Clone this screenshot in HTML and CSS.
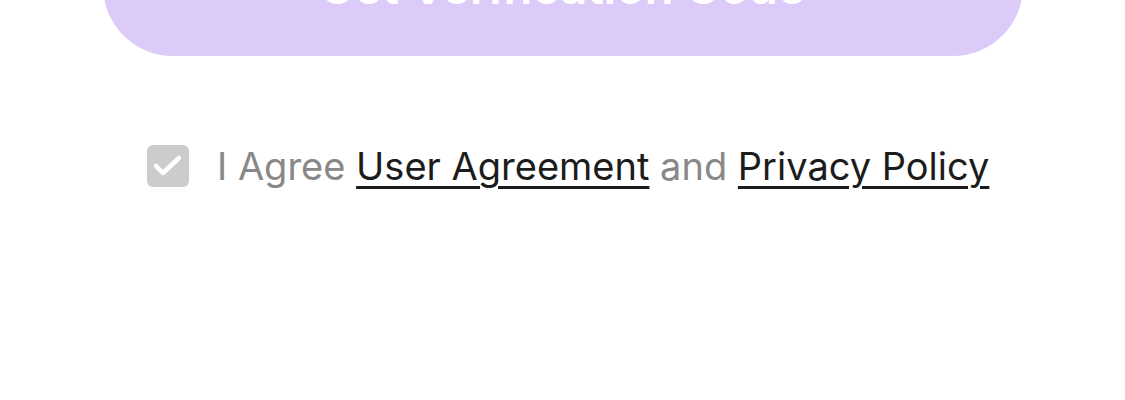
FILE: index.html
```html
<!DOCTYPE html>
<html>
<head>
<meta charset="utf-8">
<link rel="stylesheet" href="styles.css">
</head>
<body>
<div class="page">
  <button class="submit">Get Verification Code</button>
  <div class="agree">
    <span class="check">
      <svg width="42" height="42" viewBox="0 0 42 42"><path d="M9 21 L16 28 L32 13" fill="none" stroke="#fff" stroke-width="4.5" stroke-linecap="round" stroke-linejoin="round"/></svg>
    </span>
    <p class="agree-text">I Agree <a class="link">User Agreement</a> and <a class="link">Privacy Policy</a></p>
  </div>
</div>
</body>
</html>
```
FILE: styles.css
```css
html, body {
  margin: 0;
  padding: 0;
  background: #fff;
  overflow: hidden;
}
.page {
  width: 1125px;
  height: 400px;
  display: flex;
  flex-direction: column;
  align-items: center;
  font-family: Inter, "Noto Sans", sans-serif;
}
.submit {
  width: 920px;
  height: 140px;
  margin-top: -84px;
  border: none;
  border-radius: 70px;
  background: #dccbf9;
  color: #fff;
  font-family: Inter, "Noto Sans", sans-serif;
  font-size: 47px;
  font-weight: 600;
  padding: 0;
  line-height: 1;
}
.agree {
  margin-top: 88px;
  display: flex;
  align-items: center;
  gap: 28px;
  align-self: flex-start;
  margin-left: 147px;
}
.check {
  width: 42px;
  height: 42px;
  border-radius: 6px;
  background: #cccccc;
  display: flex;
}
.agree-text {
  margin: 0;
  font-size: 38px;
  color: #888888;
  line-height: 44px;
}
.link {
  color: #1c1c1c;
  text-decoration: underline;
  text-underline-offset: 6px;
  text-decoration-thickness: 3px;
}
```
